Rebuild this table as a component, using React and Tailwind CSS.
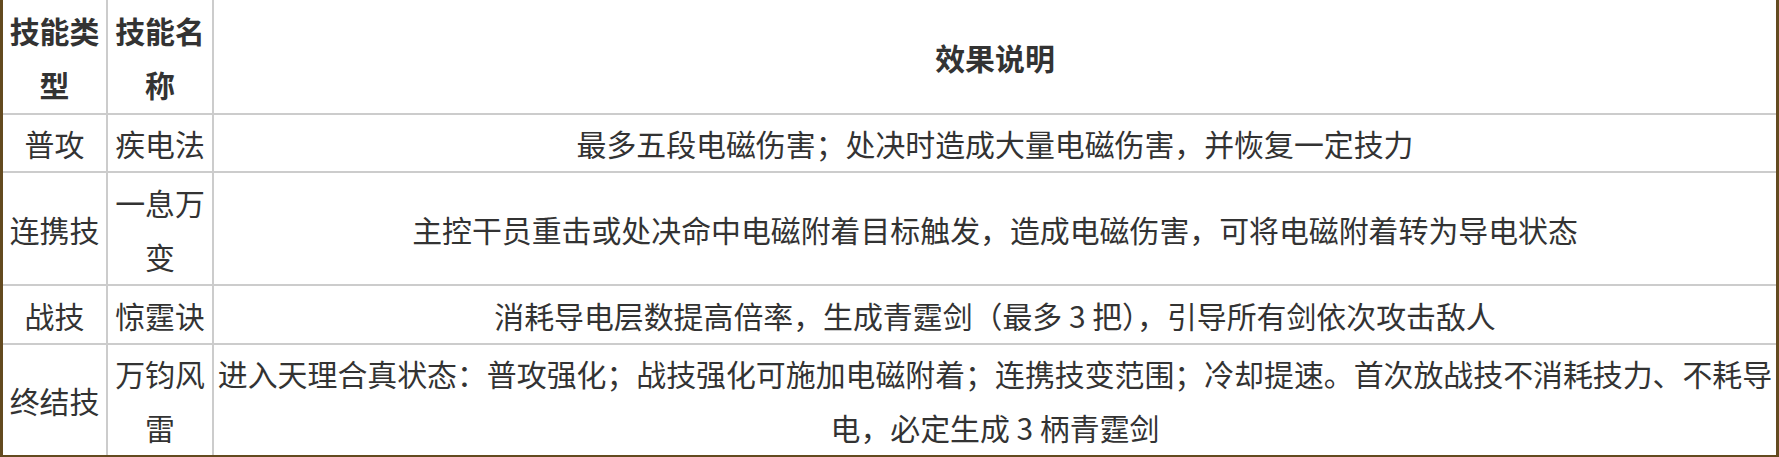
export default function App() {
  const rows = [
    ["普攻", "疾电法", "最多五段电磁伤害；处决时造成大量电磁伤害，并恢复一定技力", "py-px"],
    ["连携技", "一息万变", "主控干员重击或处决命中电磁附着目标触发，造成电磁伤害，可将电磁附着转为导电状态", "py-[1.5px]"],
    ["战技", "惊霆诀", "消耗导电层数提高倍率，生成青霆剑（最多 3 把），引导所有剑依次攻击敌人", "py-[1.5px]"],
    ["终结技", "万钧风雷", "进入天理合真状态：普攻强化；战技强化可施加电磁附着；连携技变范围；冷却提速。首次放战技不消耗技力、不耗导电，必定生成 3 柄青霆剑", "py-px"],
  ];
  const font = { fontFamily: '"Noto Sans CJK SC", "Noto Sans", sans-serif' };
  return (
    <div className="w-[1779px] bg-white" style={font}>
      <div className="border-x-[3px] border-b-[2px] border-[#634a1f]">
        <table className="w-full table-fixed border-separate border-spacing-0 text-[29.9px] leading-[54px] text-[#333]">
          <colgroup>
            <col className="w-[103px]" />
            <col className="w-[106px]" />
            <col />
          </colgroup>
          <thead>
            <tr>
              <th className="px-0 pt-[3px] pb-[2px] text-center align-middle font-bold">技能类型</th>
              <th className="border-l-2 border-[#cccccc] px-0 pt-[3px] pb-[2px] text-center align-middle font-bold">技能名称</th>
              <th className="border-l-2 border-[#cccccc] px-0 pt-[3px] pb-[2px] text-center align-middle font-bold">效果说明</th>
            </tr>
          </thead>
          <tbody>
            {rows.map((r, i) => (
              <tr key={i}>
                <td className={"border-t-2 border-[#cccccc] px-0 text-center align-middle " + r[3]}>{r[0]}</td>
                <td className={"border-t-2 border-l-2 border-[#cccccc] px-0 text-center align-middle " + r[3]}>{r[1]}</td>
                <td className={"border-t-2 border-l-2 border-[#cccccc] px-px text-center align-middle " + r[3]}>{r[2]}</td>
              </tr>
            ))}
          </tbody>
        </table>
      </div>
    </div>
  );
}
